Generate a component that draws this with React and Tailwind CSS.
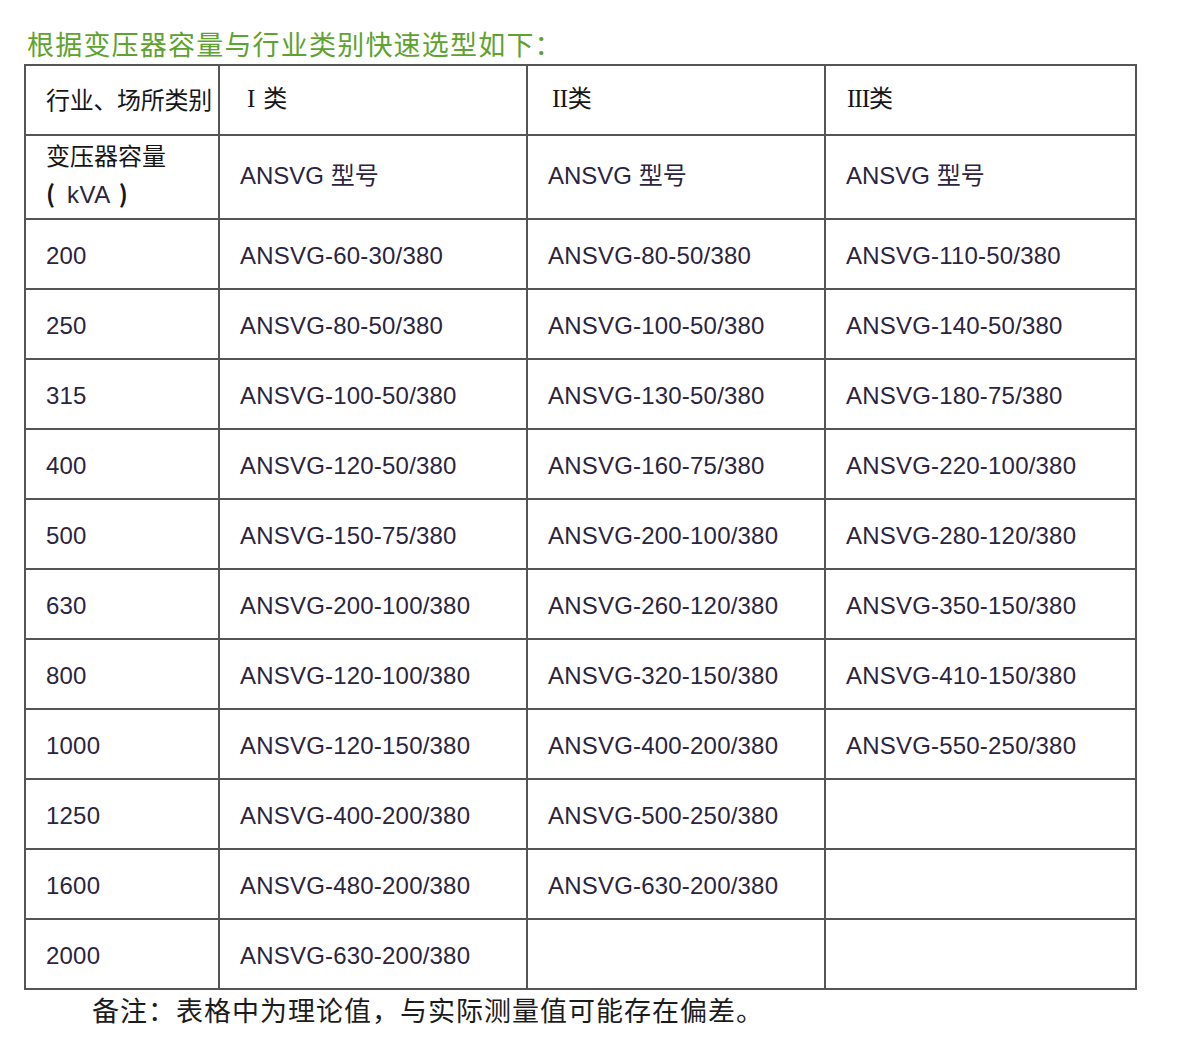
import React from "react";

const rows = [
  ["200", "ANSVG-60-30/380", "ANSVG-80-50/380", "ANSVG-110-50/380"],
  ["250", "ANSVG-80-50/380", "ANSVG-100-50/380", "ANSVG-140-50/380"],
  ["315", "ANSVG-100-50/380", "ANSVG-130-50/380", "ANSVG-180-75/380"],
  ["400", "ANSVG-120-50/380", "ANSVG-160-75/380", "ANSVG-220-100/380"],
  ["500", "ANSVG-150-75/380", "ANSVG-200-100/380", "ANSVG-280-120/380"],
  ["630", "ANSVG-200-100/380", "ANSVG-260-120/380", "ANSVG-350-150/380"],
  ["800", "ANSVG-120-100/380", "ANSVG-320-150/380", "ANSVG-410-150/380"],
  ["1000", "ANSVG-120-150/380", "ANSVG-400-200/380", "ANSVG-550-250/380"],
  ["1250", "ANSVG-400-200/380", "ANSVG-500-250/380", ""],
  ["1600", "ANSVG-480-200/380", "ANSVG-630-200/380", ""],
  ["2000", "ANSVG-630-200/380", "", ""],
];

const cell = "border-2 border-[#555555] pl-[20px] align-middle p-0";

export default function App() {
  return (
    <div className="min-h-[1040px] w-[1182px] bg-white pl-[24px] font-['Liberation_Sans','Noto_Sans_CJK_SC',sans-serif]">
      <div className="h-[64px] pt-[30px] pl-[3px] text-[27px] leading-[28px] text-[#5ea22f] font-['Noto_Sans_CJK_SC',sans-serif] whitespace-nowrap tracking-[1.2px]">
        根据变压器容量与行业类别快速选型如下：
      </div>
      <table className="border-collapse table-fixed w-[1111px]">
        <colgroup>
          <col className="w-[194px]" />
          <col className="w-[308px]" />
          <col className="w-[298px]" />
          <col className="w-[311px]" />
        </colgroup>
        <tbody>
          <tr className="h-[70px] text-[#161616] text-[24px]">
            <td className={cell + " pb-[3px] font-['Noto_Sans_CJK_SC',sans-serif] pl-[19px] tracking-[-0.3px] whitespace-nowrap"}>行业、场所类别</td>
            <td className={cell + " pb-[3px] pl-[27px]"}>
              <span className="font-['Liberation_Serif',serif] text-[25px]">I</span>
              <span className="ml-[8px] font-['Noto_Sans_CJK_SC',sans-serif]">类</span>
            </td>
            <td className={cell + " pb-[3px] pl-[24px]"}>
              <span className="font-['Liberation_Serif',serif] text-[25px] tracking-[-0.5px]">II</span>
              <span className="font-['Noto_Sans_CJK_SC',sans-serif]">类</span>
            </td>
            <td className={cell + " pb-[3px] pl-[21px]"}>
              <span className="font-['Liberation_Serif',serif] text-[25px] tracking-[-1px]">III</span>
              <span className="font-['Noto_Sans_CJK_SC',sans-serif]">类</span>
            </td>
          </tr>
          <tr className="h-[84px] text-[24px] text-[#2a2440]">
            <td className={cell + " leading-[38px] text-[#161616] font-['Noto_Sans_CJK_SC',sans-serif]"}>
              <div className="-mt-[4px]">变压器容量</div>
              <div className="whitespace-nowrap">
                <span className="font-bold">(</span>
                <span className="ml-[12px] font-['Liberation_Sans',sans-serif] text-[#2a2440] tracking-[0.5px]">kVA</span>
                <span className="ml-[8px] font-bold">)</span>
              </div>
            </td>
            <td className={cell + " pb-[3px]"}>ANSVG 型号</td>
            <td className={cell + " pb-[3px]"}>ANSVG 型号</td>
            <td className={cell + " pb-[3px]"}>ANSVG 型号</td>
          </tr>
          {rows.map((r) => (
            <tr key={r[0]} className="h-[70px] text-[24px] text-[#2a2440] tracking-[0.2px]">
              {r.map((c, i) => (
                <td key={i} className={cell + " pt-[3px]"}>
                  {c}
                </td>
              ))}
            </tr>
          ))}
        </tbody>
      </table>
      <div className="mt-[3px] pl-[68px] text-[27px] leading-[34px] text-[#1c1c1c] font-['Noto_Sans_CJK_SC',sans-serif] tracking-[1px]">
        备注：表格中为理论值，与实际测量值可能存在偏差。
      </div>
    </div>
  );
}
